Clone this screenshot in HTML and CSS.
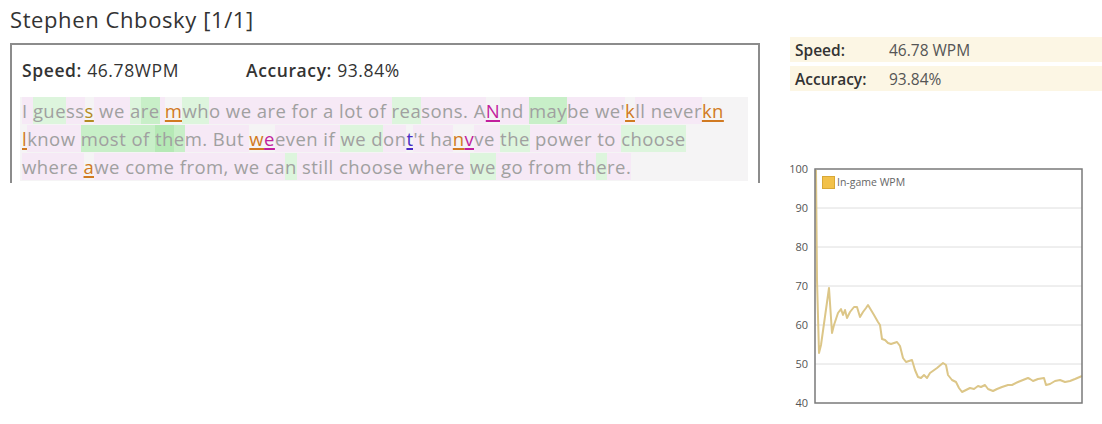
FILE: index.html
```html
<!DOCTYPE html>
<html>
<head>
<meta charset="utf-8">
<link rel="stylesheet" href="styles.css">
</head>
<body>
<div class="page">
  <div class="left">
    <h1 class="title">Stephen Chbosky [1/1]</h1>
    <div class="result-box">
      <div class="stats">
        <span class="stat"><b>Speed:</b> 46.78WPM</span>
        <span class="stat"><b>Accuracy:</b> 93.84%</span>
      </div>
      <div class="typed"><span class="p">I </span><span class="g">gue</span><span class="p">ss</span><span class="e ey">s</span><span class="p"> we </span><span class="g">a</span><span class="G">re</span><span class="p"> </span><span class="e eo">m</span><span class="g">wh</span><span class="p">o we are for a lot of </span><span class="g">rea</span><span class="p">sons. A</span><span class="e em">N</span><span class="p">nd </span><span class="G">may</span><span class="p">be we'</span><span class="e eo">k</span><span class="p">ll never</span><span class="e eo">kn</span><br><span class="e eo">l</span><span class="p">know </span><span class="G">most of </span><span class="GG">th</span><span class="G">e</span><span class="p">m. But </span><span class="e eo">w</span><span class="e em">e</span><span class="p">even if </span><span class="g">we d</span><span class="p">on</span><span class="e ep">t</span><span class="p">'t ha</span><span class="e eo">n</span><span class="e em">v</span><span class="p">ve </span><span class="g">the</span><span class="p"> power to </span><span class="g">choose</span><br><span class="p">where </span><span class="e eo">a</span><span class="p">we come from, we ca</span><span class="g">n</span><span class="p"> still choose where </span><span class="g">we</span><span class="p"> go from th</span><span class="g">e</span><span class="p">re.</span></div>
    </div>
  </div>
  <div class="right">
    <div class="summary">
      <div class="row"><span class="label">Speed:</span><span class="value">46.78 WPM</span></div>
      <div class="row"><span class="label">Accuracy:</span><span class="value">93.84%</span></div>
    </div>
    <svg class="chart" width="312" height="256" viewBox="0 0 312 256">
      <g class="grid">
        <line x1="25" y1="48" x2="292" y2="48"/>
        <line x1="25" y1="87" x2="292" y2="87"/>
        <line x1="25" y1="126" x2="292" y2="126"/>
        <line x1="25" y1="165" x2="292" y2="165"/>
        <line x1="25" y1="204" x2="292" y2="204"/>
      </g>
      <g class="ylab">
        <text x="18" y="13">100</text>
        <text x="18" y="52">90</text>
        <text x="18" y="91">80</text>
        <text x="18" y="130">70</text>
        <text x="18" y="169">60</text>
        <text x="18" y="208">50</text>
        <text x="18" y="247">40</text>
      </g>
      <polyline class="wpm" points="26,10 27,120 29,193 31,185 39,128 42,173 44,165 48,153 51,149 53,155 55,150 57,158 60,152 64,147 67,147 70,157 73,152 76,148 78,145 81,150 84,155 88,162 90,165 92,179 95,180 98,183 101,184 104,183 107,182 110,186 113,198 116,202 119,201 122,200 125,210 128,217 131,218 134,215 137,218 140,213 147,208 153,203 156,205 158,215 162,220 166,222 169,228 172,232 176,230 180,228 184,229 188,226 191,227 195,225 198,229 203,231 207,229 212,227 218,225 222,225 228,222 233,220 238,218 240,219 243,221 248,219 254,218 256,225 260,224 265,221 270,220 275,222 280,221 285,219 292,216"/>
      <rect class="frame" x="25" y="9" width="267" height="234"/>
      <rect class="swatch" x="32.5" y="16.5" width="12" height="12"/>
      <text class="legend" x="47" y="26">In-game WPM</text>
    </svg>
  </div>
</div>
</body>
</html>
```

FILE: styles.css
```css
* { box-sizing: border-box; }
html, body { margin: 0; padding: 0; background: #fff; }
body { font-family: "Open Sans", "DejaVu Sans", sans-serif; color: #333; }

.page {
  display: flex;
  align-items: flex-start;
  padding-left: 10px;
  width: 1102px;
  height: 424px;
  overflow: hidden;
}

.left { width: 750px; }

.title {
  margin: 5px 0 0 0;
  font-size: 22px;
  line-height: 28px;
  font-weight: 400;
  color: #333;
  letter-spacing: 0.6px;
}

.result-box {
  margin-top: 10px;
  height: 140px;
  border: 2px solid #8c8c8c;
  border-bottom: none;
  padding: 0 10px 0 8px;
}

.stats {
  display: flex;
  gap: 67px;
  padding: 13px 2px 0;
  height: 52px;
  font-size: 17.5px;
  line-height: 24px;
  letter-spacing: 0.6px;
  color: #333;
}
.stats b { font-weight: 600; }

.typed {
  background: #f5f4f5;
  padding: 0 2px;
  font-size: 18.5px;
  line-height: 28px;
  letter-spacing: 0.45px;
  white-space: nowrap;
  color: #a0a0a0;
}
.typed span { padding: 1px 0; }
.p { background: #f6e9f6; }
.g { background: #ddf5dd; }
.G { background: #c8efc8; }
.GG { background: #b5e9b5; }
.e { text-decoration: underline; text-underline-offset: 2px; text-decoration-thickness: 2px; }
.eo { color: #d17a22; }
.ey { color: #b48a24; }
.em { color: #c21f9e; }
.ep { color: #4a2cc4; }

.right {
  margin-left: 30px;
  width: 312px;
}

.summary {
  margin-top: 37px;
  display: flex;
  flex-direction: column;
  gap: 4px;
}
.row {
  display: flex;
  align-items: center;
  height: 25px;
  background: #fcf6e4;
  padding-left: 5px;
  font-size: 15.5px;
}
.label { width: 94px; font-weight: 600; color: #333; }
.value { color: #555; }

.chart { display: block; margin-top: 69px; }
.grid line { stroke: #dedede; stroke-width: 1; }
.ylab text { font-family: "Open Sans", sans-serif; font-size: 11px; fill: #555; text-anchor: end; }
.wpm { fill: none; stroke: #dcc688; stroke-width: 2; stroke-linejoin: round; }
.frame { fill: none; stroke: #7a7a7a; stroke-width: 1.5; }
.swatch { fill: #f2c14a; stroke: #d8a838; stroke-width: 1; }
.legend { font-family: "Open Sans", sans-serif; font-size: 10.5px; fill: #666; }
```
